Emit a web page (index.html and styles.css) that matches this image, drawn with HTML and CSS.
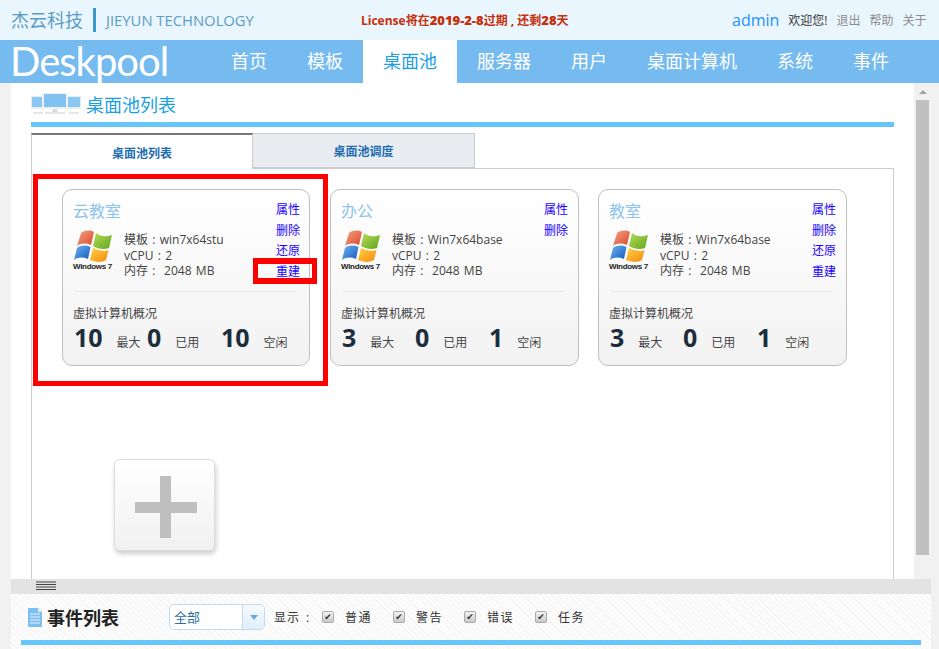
FILE: index.html
```html
<!DOCTYPE html>
<html lang="zh-CN">
<head>
  <meta charset="UTF-8" />
  <meta name="viewport" content="width=device-width, initial-scale=1" />
  <title>Deskpool - 桌面池</title>
  <link rel="stylesheet" href="styles.css">
</head>
<body>
  <svg class="defs" width="0" height="0">
    <defs>
      <linearGradient id="pane-red" x1="0" y1="0" x2="1" y2="1"><stop offset="0" stop-color="#f5a184"/><stop offset="1" stop-color="#d9482a"/></linearGradient>
      <linearGradient id="pane-green" x1="0" y1="0" x2="1" y2="1"><stop offset="0" stop-color="#b9dd5a"/><stop offset="1" stop-color="#5fa51c"/></linearGradient>
      <linearGradient id="pane-blue" x1="0" y1="0" x2="1" y2="1"><stop offset="0" stop-color="#6db4ee"/><stop offset="1" stop-color="#1559bf"/></linearGradient>
      <linearGradient id="pane-yellow" x1="0" y1="0" x2="1" y2="1"><stop offset="0" stop-color="#ffd24a"/><stop offset="1" stop-color="#f58a0c"/></linearGradient>
      <symbol id="win-flag" viewBox="0 0 40 32">
        <path d="M8 3 C12 0 17 0 21 2 L18 15 C13 13 8 13 4 16 Z" fill="url(#pane-red)"/>
        <path d="M23 3 C28 7 33 7 39 5 L36 18 C31 20 25 19 20 16 Z" fill="url(#pane-green)"/>
        <path d="M4 18 C8 15 13 15 17.500 17 L15 29 C10 27 5 27 1 30 Z" fill="url(#pane-blue)"/>
        <path d="M20 18 C25 20 30 22 35.500 20 L33 30 C28 33 22 32 17 30 Z" fill="url(#pane-yellow)"/>
      </symbol>
    </defs>
  </svg>

  <header class="top-bar">
    <div class="brand">
      <span class="brand-cn">杰云科技</span>
      <span class="brand-en">JIEYUN TECHNOLOGY</span>
    </div>
    <div class="license">License将在<b>2019-2-8</b>过期 , 还剩<b>28</b>天</div>
    <div class="user-links">
      <span class="user-name">admin</span>
      <span class="welcome">欢迎您!</span>
      <a href="#">退出</a>
      <a href="#">帮助</a>
      <a href="#">关于</a>
    </div>
  </header>

  <nav class="main-nav">
    <div class="logo">Deskpool</div>
    <a href="#">首页</a>
    <a href="#">模板</a>
    <a href="#" class="active">桌面池</a>
    <a href="#">服务器</a>
    <a href="#">用户</a>
    <a href="#">桌面计算机</a>
    <a href="#">系统</a>
    <a href="#">事件</a>
  </nav>

  <div class="page">
    <div class="content-wrap">
      <main class="content">
        <div class="section-head">
          <svg class="monitors" width="50" height="22" viewBox="0 0 50 22">
            <rect x="0" y="3" width="14" height="13" fill="#e8edf0"/>
            <rect x="1" y="4" width="12" height="10" fill="#8cc8f4"/>
            <rect x="36" y="3" width="14" height="13" fill="#e8edf0"/>
            <rect x="37" y="4" width="12" height="10" fill="#8cc8f4"/>
            <rect x="11" y="0" width="26" height="16" fill="#eef1f3"/>
            <rect x="13" y="1" width="22" height="13" fill="#82c2f2"/>
            <path d="M22 16h4l1 3h-6z" fill="#d8dcdf"/>
            <rect x="14" y="19" width="20" height="2" fill="#e4e6e8"/>
            <rect x="2" y="19" width="10" height="2" fill="#e4e6e8"/>
            <rect x="38" y="19" width="10" height="2" fill="#e4e6e8"/>
          </svg>
          <h2>桌面池列表</h2>
        </div>
        <div class="blue-line"></div>

        <div class="tabs">
          <div class="tab active">桌面池列表</div>
          <div class="tab">桌面池调度</div>
        </div>

        <div class="tab-panel">
          <div class="pool-row">
            <section class="pool-card">
              <div class="card-main">
                <div class="card-left">
                  <h3>云教室</h3>
                  <div class="card-info">
                    <div class="win-logo">
                      <svg width="40" height="32"><use href="#win-flag"/></svg>
                      <span>Windows 7</span>
                    </div>
                    <div class="specs">
                      <div>模板 : win7x64stu</div>
                      <div>vCPU : 2</div>
                      <div>内存 : &nbsp;2048 MB</div>
                    </div>
                  </div>
                </div>
                <div class="card-actions">
                  <a href="#">属性</a>
                  <a href="#">删除</a>
                  <a href="#">还原</a>
                  <a href="#">重建</a>
                </div>
              </div>
              <div class="card-divider"></div>
              <div class="summary-title">虚拟计算机概况</div>
              <div class="summary">
                <div><strong>10</strong><span>最大</span></div>
                <div><strong>0</strong><span>已用</span></div>
                <div><strong>10</strong><span>空闲</span></div>
              </div>
            </section>

            <section class="pool-card">
              <div class="card-main">
                <div class="card-left">
                  <h3>办公</h3>
                  <div class="card-info">
                    <div class="win-logo">
                      <svg width="40" height="32"><use href="#win-flag"/></svg>
                      <span>Windows 7</span>
                    </div>
                    <div class="specs">
                      <div>模板 : Win7x64base</div>
                      <div>vCPU : 2</div>
                      <div>内存 : &nbsp;2048 MB</div>
                    </div>
                  </div>
                </div>
                <div class="card-actions">
                  <a href="#">属性</a>
                  <a href="#">删除</a>
                </div>
              </div>
              <div class="card-divider"></div>
              <div class="summary-title">虚拟计算机概况</div>
              <div class="summary">
                <div><strong>3</strong><span>最大</span></div>
                <div><strong>0</strong><span>已用</span></div>
                <div><strong>1</strong><span>空闲</span></div>
              </div>
            </section>

            <section class="pool-card">
              <div class="card-main">
                <div class="card-left">
                  <h3>教室</h3>
                  <div class="card-info">
                    <div class="win-logo">
                      <svg width="40" height="32"><use href="#win-flag"/></svg>
                      <span>Windows 7</span>
                    </div>
                    <div class="specs">
                      <div>模板 : Win7x64base</div>
                      <div>vCPU : 2</div>
                      <div>内存 : &nbsp;2048 MB</div>
                    </div>
                  </div>
                </div>
                <div class="card-actions">
                  <a href="#">属性</a>
                  <a href="#">删除</a>
                  <a href="#">还原</a>
                  <a href="#">重建</a>
                </div>
              </div>
              <div class="card-divider"></div>
              <div class="summary-title">虚拟计算机概况</div>
              <div class="summary">
                <div><strong>3</strong><span>最大</span></div>
                <div><strong>0</strong><span>已用</span></div>
                <div><strong>1</strong><span>空闲</span></div>
              </div>
            </section>
          </div>

          <button class="add-pool" aria-label="添加桌面池"></button>

          <!-- red marks drawn over the screenshot -->
          <div class="mark mark-card"></div>
          <div class="mark mark-rebuild"></div>
        </div>
      </main>

      <div class="scrollbar">
        <div class="scroll-up"></div>
        <div class="scroll-thumb"></div>
      </div>
    </div>

    <div class="splitter">
      <svg width="20" height="11" viewBox="0 0 20 11">
        <path d="M0 1h20M0 3.500h20M0 6h20M0 8.500h20" stroke="#444" stroke-width="1"/>
      </svg>
    </div>

    <section class="events">
      <div class="events-bar">
        <h2 class="events-title">
          <svg width="14" height="19" viewBox="0 0 14 19">
            <path d="M0 0h10l4 4v15H0z" fill="#7cc0f2"/>
            <path d="M10 0l4 4h-4z" fill="#d6ecfb"/>
            <path d="M2 6h10M2 9h10M2 12h10M2 15h10" stroke="#e4f3fd" stroke-width="1"/>
          </svg>
          事件列表
        </h2>
        <div class="select-box">
          <span>全部</span>
          <i></i>
        </div>
        <span class="show-label">显示 :</span>
        <label class="check"><input type="checkbox" checked /><span>普通</span></label>
        <label class="check"><input type="checkbox" checked /><span>警告</span></label>
        <label class="check"><input type="checkbox" checked /><span>错误</span></label>
        <label class="check"><input type="checkbox" checked /><span>任务</span></label>
      </div>
      <div class="blue-line events-line"></div>
    </section>
  </div>
</body>
</html>
```

FILE: styles.css
```css
* {
  box-sizing: border-box;
}
html, body {
  height: 100%;
}
body {
  margin: 0;
  height: 649px;
  overflow: hidden;
  display: flex;
  flex-direction: column;
  background: #f1f1f1;
  font-family: "Open Sans", "Noto Sans CJK SC", sans-serif;
  font-size: 12px;
  color: #333;
}
a {
  text-decoration: none;
}
h2, h3 {
  margin: 0;
  font-weight: 400;
}
.defs {
  position: absolute;
}

/* top bar */
.top-bar {
  height: 40px;
  flex: none;
  display: flex;
  align-items: center;
  background: #eaf6fd;
}
.brand {
  width: 361px;
  padding-left: 11px;
  display: flex;
  align-items: center;
}
.brand-cn {
  font-size: 18px;
  line-height: 24px;
  color: #5a9cc6;
  padding-right: 10px;
  margin-right: 10px;
  border-right: 3px solid #3f97cc;
}
.brand-en {
  font-size: 14.800px;
  color: #5b9cc4;
}
.license {
  width: 364px;
  font-size: 12px;
  font-weight: 700;
  color: #c42f0c;
  margin-top: -1px;
}
.license b {
  font-size: 13px;
}
.user-links {
  display: flex;
  align-items: center;
  gap: 9px;
  color: #888;
}
.user-links a {
  color: #8c8c8c;
  font-size: 12px;
}
.user-name {
  font-size: 16px;
  color: #1f8fff;
  margin-left: 7px;
}
.welcome {
  color: #333;
  font-size: 12px;
}

/* main nav */
.main-nav {
  height: 43px;
  flex: none;
  display: flex;
  background: #76bbef;
}
.logo {
  width: 211px;
  padding: 0 0 0 10px;
  font-family: "Lato", sans-serif;
  font-size: 40px;
  line-height: 43px;
  letter-spacing: -1px;
  color: #fff;
}
.main-nav a {
  padding: 0 20px;
  font-size: 18px;
  line-height: 43px;
  color: #fff;
}
.main-nav a.active {
  background: #fff;
  color: #1ba1e2;
}

/* page area */
.page {
  flex: 1;
  margin: 0 8px 0 11px;
  background: #fff;
  display: flex;
  flex-direction: column;
  min-height: 0;
}
.content-wrap {
  height: 496px;
  flex: none;
  display: flex;
}
.content {
  flex: 1;
  padding: 0 20px;
  display: flex;
  flex-direction: column;
}
.section-head {
  height: 39px;
  display: flex;
  align-items: center;
  gap: 5px;
  padding-top: 3px;
}
.section-head h2 {
  font-size: 18px;
  color: #1ba1e2;
}
.blue-line {
  height: 5px;
  flex: none;
  background: #66c6fc;
}
.tabs {
  margin-top: 6px;
  height: 36px;
  flex: none;
  display: flex;
  position: relative;
  z-index: 1;
}
.tab {
  width: 222px;
  height: 35px;
  background: #e9edf1;
  border: 1px solid #c8ccd0;
  border-left-width: 0;
  text-align: center;
  font-weight: 700;
  line-height: 36px;
  color: #1b6cb0;
}
.tab.active {
  height: 36px;
  background: #fff;
  border: 1px solid #ccc;
  border-top: 2px solid #777;
  border-bottom: 0;
  line-height: 37px;
}
.tab-panel {
  flex: 1;
  margin-top: -1px;
  border: 1px solid #ccc;
  border-bottom: 0;
  position: relative;
  padding: 20px 30px 0;
  min-height: 0;
}
.pool-row {
  display: flex;
  gap: 20px;
}
.pool-card {
  width: 248px;
  height: 177px;
  padding: 0 9px 0 10px;
  border: 1px solid #bfbfbf;
  border-radius: 10px;
  background: linear-gradient(#fff, #f2f2f2);
}
.pool-card:nth-child(2) {
  width: 249px;
  padding-right: 10px;
  margin-right: -1px;
}
.pool-card:nth-child(3) {
  width: 249px;
  padding-right: 10px;
}
.card-main {
  height: 101px;
  display: flex;
  justify-content: space-between;
}
.card-left h3 {
  margin-top: 10px;
  font-size: 16px;
  line-height: 22px;
  color: #8cc4ee;
}
.card-info {
  margin-top: 8px;
  display: flex;
  gap: 11px;
}
.win-logo {
  width: 40px;
  display: flex;
  flex-direction: column;
  align-items: flex-start;
}
.win-logo span {
  font-family: "Liberation Sans", sans-serif;
  font-size: 8px;
  line-height: 10px;
  font-weight: 700;
  white-space: nowrap;
  letter-spacing: -0.3px;
  color: #222;
}
.specs {
  margin-top: 2px;
  line-height: 15.500px;
  word-spacing: 1.200px;
  color: #444;
  white-space: nowrap;
}
.card-actions {
  margin-top: 10px;
  display: flex;
  flex-direction: column;
}
.card-actions a {
  line-height: 20.700px;
  color: #1a00ff;
}
.card-divider {
  height: 1px;
  margin: 0 4px 0 2px;
  background: #e8e8e8;
}
.summary-title {
  margin-top: 13px;
  line-height: 17px;
  color: #444;
}
.summary {
  display: grid;
  grid-template-columns: 73px 74px 74px;
  margin-left: 1px;
}
.summary div {
  display: flex;
  align-items: baseline;
  gap: 14px;
  white-space: nowrap;
}
.summary strong {
  font-size: 25px;
  line-height: 30px;
  color: #1c2d3d;
}
.summary span {
  color: #444;
}
.add-pool {
  display: block;
  width: 101px;
  height: 92px;
  margin: 93px 0 0 52px;
  padding: 0;
  border: 1px solid #ddd;
  border-radius: 6px;
  background-color: #fafafa;
  background-image:
    linear-gradient(#bfbfbf, #bfbfbf),
    linear-gradient(#bfbfbf, #bfbfbf),
    linear-gradient(#fff, #f1f1f1);
  background-size: 62px 11px, 11px 62px, 100% 100%;
  background-position: 20px 42px, 45px 16px, 0 0;
  background-repeat: no-repeat;
  box-shadow: 1px 3px 5px rgba(0, 0, 0, 0.2);
}

/* red marks */
.mark {
  position: absolute;
  border: 5px solid #f00;
}
.mark-card {
  left: 1px;
  top: 5px;
  width: 295px;
  height: 212px;
}
.mark-rebuild {
  left: 221px;
  top: 89px;
  width: 64px;
  height: 26px;
  border-width: 6px 5px;
}

/* scrollbar */
.scrollbar {
  width: 17px;
  flex: none;
  background: #f1f1f1;
  padding: 0 2px;
}
.scroll-up {
  height: 17px;
  padding-top: 7px;
  display: flex;
  justify-content: center;
}
.scroll-up::before {
  content: "";
  border: 4px solid transparent;
  border-top: 0;
  border-bottom: 4px solid #a3a3a3;
  height: 0;
}
.scroll-thumb {
  height: 455px;
  background: #c0c0c0;
}

/* events */
.splitter {
  height: 15px;
  flex: none;
  padding: 2px 0 0 25px;
  background: #e3e3e3;
  line-height: 0;
}
.events {
  flex: 1;
  background-color: #fcfcfc;
  background-image: repeating-linear-gradient(45deg, #f5f5f5 0 1px, transparent 1px 4px);
  padding: 0 10px;
}
.events-bar {
  height: 46px;
  display: flex;
  align-items: center;
}
.events-title {
  width: 148px;
  padding-left: 7px;
  display: flex;
  align-items: center;
  gap: 5px;
  font-size: 18px;
  font-weight: 700;
  color: #222;
}
.select-box {
  width: 96px;
  height: 26px;
  display: flex;
  border: 1px solid #c5dbec;
  border-radius: 5px;
  background: #fff;
  color: #2e6e9e;
  font-size: 13px;
  line-height: 24px;
  overflow: hidden;
}
.select-box span {
  width: 73px;
  padding-left: 4px;
  border-right: 1px solid #c5dbec;
}
.select-box i {
  flex: 1;
  background: linear-gradient(#f6fafd, #dfeffc);
  display: flex;
  justify-content: center;
  padding-top: 10px;
}
.select-box i::before {
  content: "";
  height: 0;
  border: 4px solid transparent;
  border-bottom: 0;
  border-top: 5px solid #6da8d4;
}
.show-label {
  margin-left: 9px;
  width: 48px;
  word-spacing: 2px;
  letter-spacing: 1px;
}
.check {
  width: 71px;
  display: flex;
  align-items: center;
  gap: 11px;
}
.check input {
  appearance: none;
  width: 12px;
  height: 12px;
  margin: 0;
  border: 1px solid #aaa;
  border-radius: 2px;
  background: linear-gradient(#f4f4f4, #c9c9c9);
  display: flex;
  align-items: center;
  justify-content: center;
}
.check input:checked::before {
  content: "✔";
  font-family: "DejaVu Sans", sans-serif;
  font-size: 9px;
  line-height: 10px;
  color: #333;
}
.check span {
  letter-spacing: 1.500px;
}
```
